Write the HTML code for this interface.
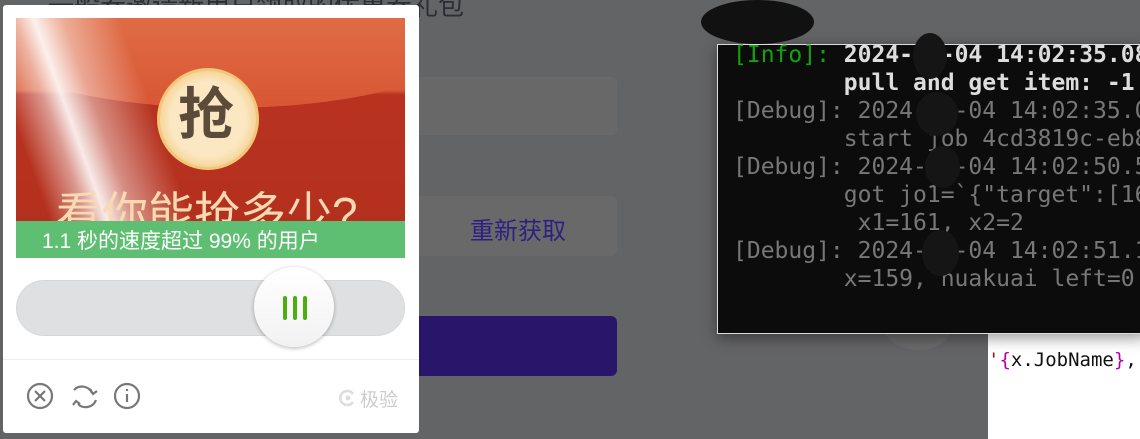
<!DOCTYPE html>
<html><head><meta charset="utf-8"><style>
*{margin:0;padding:0;box-sizing:border-box}
body{width:1140px;height:439px;overflow:hidden;background:#636466;position:relative;font-family:"Liberation Sans","Noto Sans CJK SC",sans-serif}
.abs{position:absolute}
.mono{font-family:"DejaVu Sans Mono","Liberation Mono",monospace}
</style></head><body>
<div class="abs" style="left:48px;top:-14px;font-size:26px;color:#2a2e35;white-space:nowrap">一般券邀请新用户领取的优惠券礼包</div>
<div class="abs" style="left:160px;top:77px;width:457px;height:58px;border:1px solid #6a6a6c;border-radius:6px;background:#686869"></div>
<div class="abs" style="left:160px;top:196px;width:457px;height:60px;border-radius:6px;background:#69696a"></div>
<div class="abs" style="left:470px;top:211px;font-size:24px;color:#2d2080">重新获取</div>
<div class="abs" style="left:160px;top:316px;width:457px;height:60px;border-radius:6px;background:#29166a"></div>

<!-- captcha -->
<div class="abs" style="left:3px;top:5px;width:416px;height:428px;background:#fff;border-radius:3px"></div>
<div class="abs" style="left:16px;top:18px;width:389px;height:240px;overflow:hidden;background:linear-gradient(180deg,#e06a45 0%,#d95a35 30%,#b8321f 32%,#b3301e 100%)">
 <div class="abs" style="left:-40px;top:-60px;width:500px;height:150px;border-radius:50%;background:linear-gradient(180deg,#e47b50,#d85634)"></div>
 <div class="abs" style="left:0;top:0;width:389px;height:240px;background:linear-gradient(70deg,rgba(255,255,255,0) 10%,rgba(255,255,255,.5) 18%,rgba(255,255,255,.9) 22%,rgba(255,255,255,.45) 28%,rgba(255,255,255,0) 40%)"></div>
 <div class="abs" style="left:141px;top:50px;width:102px;height:102px;border-radius:50%;background:radial-gradient(circle,#fbe8c2 55%,#f0c070 90%);border:3px solid #f3c77a"></div>
 <div class="abs" style="left:162px;top:62px;font-size:56px;font-weight:bold;color:#5c4a3a;line-height:70px">抢</div>
 <div class="abs" style="left:40px;top:166px;font-size:46px;color:#f7d9b2;line-height:60px;white-space:nowrap">看你能抢多少?</div>
 <div class="abs" style="left:0;top:203px;width:389px;height:37px;background:#5ebf72"></div>
 <div class="abs" style="left:26px;top:207px;font-size:21px;color:#fff;white-space:nowrap">1.1 秒的速度超过 99% 的用户</div>
</div>
<div class="abs" style="left:16px;top:280px;width:389px;height:56px;border-radius:28px;background:#dfe0e2;border:1px solid #d6d7d9"></div>
<div class="abs" style="left:254px;top:267px;width:80px;height:80px;border-radius:50%;background:linear-gradient(#fff,#f2f2f2);box-shadow:0 1px 4px rgba(0,0,0,.3)"></div>
<div class="abs" style="left:283px;top:296px;width:4px;height:24px;background:#4caf11;border-radius:2px"></div>
<div class="abs" style="left:293px;top:296px;width:4px;height:24px;background:#4caf11;border-radius:2px"></div>
<div class="abs" style="left:303px;top:296px;width:4px;height:24px;background:#4caf11;border-radius:2px"></div>
<div class="abs" style="left:3px;top:359px;width:416px;height:1px;background:#eee"></div>
<svg class="abs" style="left:25px;top:381px" width="120" height="30" viewBox="0 0 120 30" fill="none" stroke="#777" stroke-width="2.2">
 <circle cx="15" cy="15" r="12"/><path d="M10 10l10 10M20 10l-10 10"/>
 <path d="M49 9a11 11 0 0 1 18 3M71 19a11 11 0 0 1-18 4"/><path d="M65 8l3 5 4-3M55 23l-4-3 -3 4" />
 <circle cx="102" cy="15" r="12"/><path d="M102 13v8M102 8v2"/>
</svg>
<svg class="abs" style="left:338px;top:389px" width="18" height="18" viewBox="0 0 18 18" fill="none" stroke="#ddd" stroke-width="2.5"><path d="M15 5A7 7 0 1 0 15 13"/><circle cx="10" cy="9" r="2.5" fill="#ddd" stroke="none"/></svg>
<div class="abs" style="left:360px;top:385px;font-size:19px;color:#ccc">极验</div>

<!-- terminal -->
<div class="abs" style="left:988px;top:333px;width:152px;height:106px;background:#fff"></div>
<div class="abs mono" style="left:988px;top:349px;font-size:19px;color:#111;white-space:nowrap"><span style="color:#a31515">'</span><span style="color:#b000b0">{</span>x.JobName<span style="color:#b000b0">}</span>,</div>
<div class="abs" style="left:883px;top:300px;width:70px;height:50px;border-radius:50%;background:#6a6a6b"></div>
<div class="abs" style="left:717px;top:44px;width:430px;height:290px;background:#0c0c0c;border:1px solid #ddd;box-shadow:0 4px 14px rgba(0,0,0,.4)"></div>
<div class="abs mono" style="left:733px;top:41px;font-size:23px;line-height:28px;white-space:pre;color:#777"><span style="color:#13a10e">[Info]:</span> <b style="color:#ddd">2024-  -04 14:02:35.08</b>
<b style="color:#ddd">        pull and get item: -1</b>
[Debug]: 2024-  -04 14:02:35.0
        start job 4cd3819c-eb8
[Debug]: 2024-  -04 14:02:50.5
        got jo1=`{"target":[16
         x1=161, x2=2
[Debug]: 2024-  -04 14:02:51.1
        x=159, huakuai left=0</div>
<div class="abs" style="left:701px;top:0;width:113px;height:44px;border-radius:50%;background:#111"></div>
<div class="abs" style="left:913px;top:33px;width:34px;height:46px;border-radius:50%;background:#151515"></div>
<div class="abs" style="left:916px;top:92px;width:42px;height:44px;border-radius:50%;background:#151515"></div>
<div class="abs" style="left:925px;top:146px;width:35px;height:42px;border-radius:50%;background:#151515"></div>
<div class="abs" style="left:922px;top:230px;width:37px;height:46px;border-radius:50%;background:#151515"></div>
</body></html>
